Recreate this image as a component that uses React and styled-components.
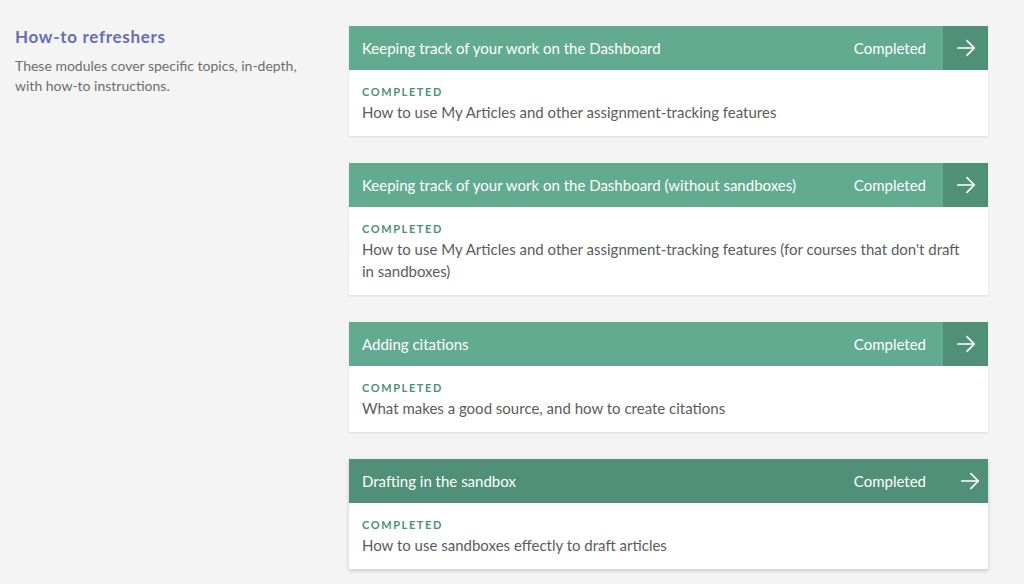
import React from "react";
import styled, { createGlobalStyle, css } from "styled-components";

const Global = createGlobalStyle`
  html, body { margin: 0; padding: 0; background: #f4f4f4; }
  body { font-family: Lato, "Open Sans", sans-serif; }
`;

const Page = styled.div`
  display: grid;
  grid-template-columns: 334px 639px;
  padding: 26px 15px 0 15px;
  min-height: 584px;
  box-sizing: border-box;
`;

const Intro = styled.div``;

const Title = styled.h2`
  margin: 0 0 8px 0;
  font-size: 17px;
  font-weight: 700;
  letter-spacing: 0.7px;
  color: #676eb4;
  line-height: 22px;
`;

const Desc = styled.p`
  margin: 0;
  font-size: 14px;
  line-height: 20px;
  color: #6e6e6e;
  width: 300px;
`;

const List = styled.div`
  display: flex;
  flex-direction: column;
  gap: 27px;
`;

const Card = styled.div`
  background: #fff;
  box-shadow: ${(p) => (p.$hover ? "0 2px 4px rgba(0,0,0,0.18)" : "0 1px 2px rgba(0,0,0,0.1)")};
`;

const Header = styled.div`
  display: flex;
  align-items: stretch;
  height: 44px;
  background: ${(p) => (p.$hover ? "#508f78" : "#62ab91")};
  color: #fff;
`;

const HeaderTitle = styled.div`
  flex: 1;
  display: flex;
  align-items: center;
  padding-left: 13px;
  font-size: 15px;
`;

const Status = styled.div`
  display: flex;
  align-items: center;
  padding-right: 17px;
  font-size: 15px;
`;

const ArrowBox = styled.div`
  width: 45px;
  display: flex;
  align-items: center;
  justify-content: center;
  background: #508f78;
  box-sizing: border-box;
  ${(p) =>
    p.$hover &&
    css`
      padding-left: 8px;
    `}
`;

const Body = styled.div`
  padding: 15px 13px 13px 13px;
`;

const Label = styled.div`
  font-size: 11px;
  font-weight: 700;
  letter-spacing: 1.6px;
  color: #4f8f78;
  line-height: 14px;
  margin-bottom: 2px;
`;

const Text = styled.div`
  font-size: 15px;
  line-height: 22px;
  color: #5c5c5c;
`;

const Arrow = () => (
  <svg width="22" height="22" viewBox="0 0 24 24" fill="none" stroke="#fff" strokeWidth="1.9" strokeLinecap="round" strokeLinejoin="round">
    <path d="M3 12h18" />
    <path d="M13 4l8 8-8 8" />
  </svg>
);

const items = [
  {
    title: "Keeping track of your work on the Dashboard",
    text: "How to use My Articles and other assignment-tracking features",
  },
  {
    title: "Keeping track of your work on the Dashboard (without sandboxes)",
    text: "How to use My Articles and other assignment-tracking features (for courses that don't draft in sandboxes)",
  },
  {
    title: "Adding citations",
    text: "What makes a good source, and how to create citations",
  },
  {
    title: "Drafting in the sandbox",
    text: "How to use sandboxes effectly to draft articles",
    hover: true,
  },
];

export default function App() {
  return (
    <>
      <Global />
      <Page>
        <Intro>
          <Title>How-to refreshers</Title>
          <Desc>These modules cover specific topics, in-depth, with how-to instructions.</Desc>
        </Intro>
        <List>
          {items.map((it) => (
            <Card key={it.title} $hover={it.hover}>
              <Header $hover={it.hover}>
                <HeaderTitle>{it.title}</HeaderTitle>
                <Status>Completed</Status>
                <ArrowBox $hover={it.hover}>
                  <Arrow />
                </ArrowBox>
              </Header>
              <Body>
                <Label>COMPLETED</Label>
                <Text>{it.text}</Text>
              </Body>
            </Card>
          ))}
        </List>
      </Page>
    </>
  );
}
